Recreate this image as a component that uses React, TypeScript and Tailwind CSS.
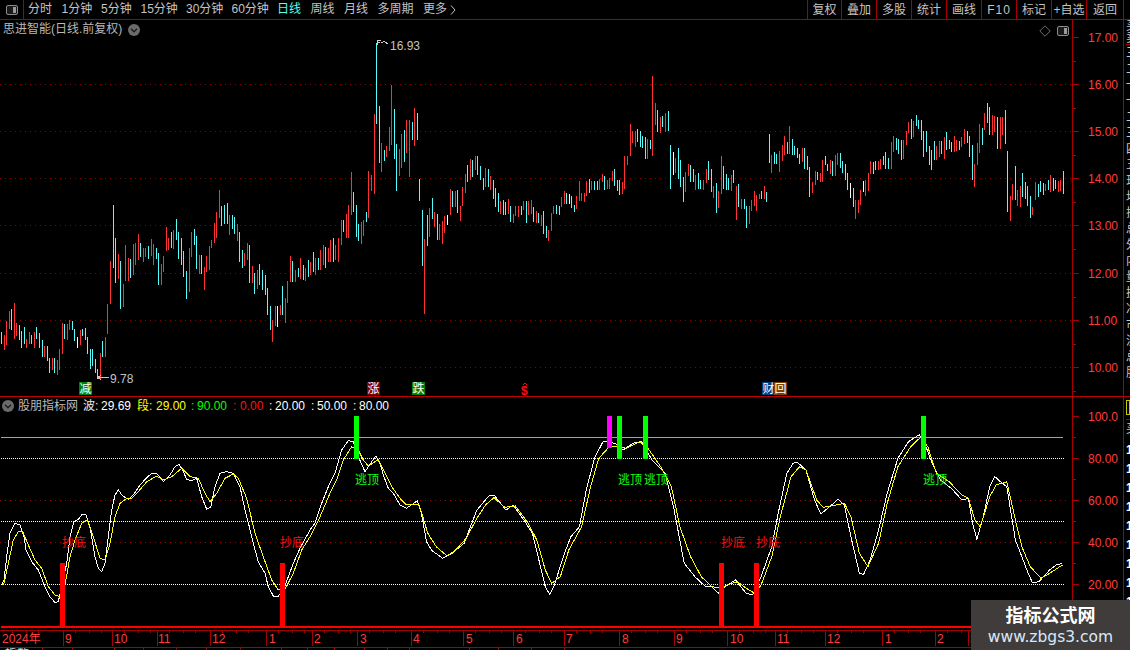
import React from "react";

type Bar = { x: number; c: string; y1: number; y2: number };

const parse = (s: string, ox: number, oy: number, sc = 3): Bar[] =>
  s
    .trim()
    .split(/\s+/)
    .map((t) => {
      const m = t.match(/(\d+)([rcw])(\d+)-(\d+)/)!;
      return {
        x: ox + Math.floor(+m[1] / sc),
        c: m[2],
        y1: oy + Math.floor(+m[3] / sc),
        y2: oy + Math.ceil(+m[4] / sc),
      };
    });

const A = `4c427-462 13r435-480 19r393-465 28r363-415 34c358-420 43r340-445 49r400-438 58c405-450 64c423-474 73c412-460 79r447-472 88r427-462 94c435-462 103r427-474 109c412-447 118c430-472 127c450-500 133r468-500 142c468-512 148c505-548 157r505-540 163c505-548 172r510-555 178r477-540 187r400-492 193c402-445 202r403-450 208r392-418 217c393-420 223c418-453 232w442-474 241r420-465 247c418-438 256c415-450 262c442-490 271c477-537 277c477-527 286c507-547 292c537-565 301r490-568 307c453-500 316r442-500 322r343-432 331r213-342 340c45-232 346c145-278 355r193-267 361c215-355 370r282-350 376r165-272 385r205-272 391c208-262 400r162-255 406r160-225 415r133-210 421c160-200 430r175-215 436r175-200 445c168-207 454r148-198 460r163-225 469c175-205 475c190-285 484r222-285 490r198-245 499r113-182 505r145-180 514c126-173 520r120-175 529c88-150 535c126-205 544c145-225 550c185-260 559c243-327 568r175-305 574r126-200 583c118-165 589c138-235 598r195-250 604c195-250 613r232-300 619r200-245 628r168-240 634r150-172 643r100-158 649r67-143 658r0-84 664c50-107 673c45-102 682c40-102 688r75-135 697c75-115 703c82-132 712r102-152 718c126-215 727c180-232 733r190-228 742r160-210 748c165-278 757r228-278 763c250-312 772r240-297 778c222-285 787c240-300 796c255-315 802c295-375 811c348-420 817r390-456 826r350-408 832w348-410 841r345-375 847c290-375 856r325-398 862r275-338 871r198-275 877c215-275 886r240-275 895c235-260`;

const GAP = `300r258-279 303c265-280 305r268-281 308c260-277 310r262-275 313c252-272 315r258-275 318c258-270 320r250-270 323r245-265 325c247-268 328r248-262 330r240-262 333c238-262 335r245-260 338r238-262`;

const B = `4r572-645 10c570-605 19r552-622 25r525-622 34r426-555 40c486-545 49c525-620 55c582-632 64r578-640 70r570-618 79c548-575 85r425-563 94r435-482 103r252-492 109c40-282 118c228-398 124r340-425 133c360-393 139r348-380 148r293-362 154r165-343 163c237-387 169c342-482 178r357-438 184r312-412 193c300-395 199r270-368 208r272-440 217c277-330 223r235-347 232c250-330 238c447-512 247c540-707 253r628-852 262c555-648 268r535-620 277c505-567 283r547-590 292c553-630 298r583-628 307r575-640 313r558-608 322w555-585 331r477-555 337c483-530 346r483-530 352c480-548 361r530-572 367r472-528 376r432-488 382c405-455 391r387-450 397c390-440 406r380-420 412c378-435 421c408-450 430c445-480 436r415-470 445c417-470 451r438-478 460c450-507 466c475-530 475c490-545 481r513-552 490c510-553 496c518-555 505r507-550 511c530-575 520r552-578 526r530-558 535r530-560 544c528-555 550r513-538 559c513-578 565r515-555 574r510-550 580c532-575 589r545-578 595c550-577 604r555-588 610c545-612 619c588-622 625r600-632 634r550-603 640r528-552 649c525-552 658c530-555 664r503-530 673r483-520 679c490-522 688w492-520 694c500-533 703c525-545 709r498-535 718r453-512 724r490-512 733r490-515 739r453-497 748c447-488 754r453-480 763c453-480 772c455-480 778r447-478 787r432-455 793c440-480 802r450-475 808r445-475 817r425-453 823c418-467 832c450-483 838c450-493 847r457-492 853r380-477 862r378-405 871r282-378 877r305-338 886r305-350 892c297-335 901c305-350 907c318-352 916c322-385 922r328-387 931c330-355 937r140-378 946r220-285 952c240-306 961r262-308 967c258-290 976r250-305 985c245-303 991c345-477 1000w367-435 1006r385-428 1015c355-445`;

const C = `1c210-290 10c262-335 16r247-305 25r222-258 31c225-275 40c238-275 46r255-300 55c250-295 61c270-297 70r272-300 79r237-278 85c213-270 94c237-305 100r288-323 109c280-368 115r305-353 124r198-310 130c228-297 139c252-300 145c265-300 154r255-302 160c240-278 169r288-390 175c282-350 184r328-355 193c328-357 199c348-413 208r348-400 214r332-362 223r305-348 229r315-362 238r312-327 244c303-327 253r288-327 259c307-335 268c132-218 274r195-248 283c187-222 289c192-222 298r185-245 307r165-212 313r140-195 322c158-192 328r110-192 337c147-195 343c168-195 352c175-203 358c192-222 367r175-215 373c175-235 382c198-240 388c232-320 397r278-308 406r243-285 412c247-270 421r250-275 427r210-275 436c198-225 442c222-243 451r210-250 457c215-258 466r195-258 472r190-225 481c190-232 487c213-248 496c222-270 502c250-300 511w280-323 520c295-350 526r330-387 535r330-368 541r300-345 550w275-305 556r272-318 565r250-302 571r213-252 580c218-252 586c215-238 595r215-240 601r208-235 610c198-225 616c188-237 625c205-237 634r158-235 640r138-185 649c145-178 655c148-190 664c150-210 670r152-205 679r125-165 685r97-127 694c87-147 700r95-140 709c75-107 715c90-115 724c90-150 730c125-200 739c125-185 748c168-225 754c180-240 763c155-208 769r168-208 778r155-200 784c155-190 793r142-207 799c127-180 808c150-175 814c158-186 823r138-186 829r150-182 838c153-178 844r142-170 853r118-160 862c125-157 868c138-200 877c165-270 883r222-290 892r160-225 898r102-188 907c115-165 913r70-120 922c40-98 928c52-135 937r75-135 943r78-125 952c82-175 961r82-175 967r82-135 976c60-162 982c183-365 991r320-392 997r282-330 1006c228-330 1012r300-348 1021r288-350 1027c250-320 1036c277-325 1042c288-348 1051c320-383 1057r352-375 1066r277-330 1075c282-320 1081c275-305 1090c280-315 1096r282-303 1105c270-300 1111r255-305 1120c265-302 1126c270-295 1135r275-305 1141r272-303 1150c243-312`;

const bars: Bar[] = [
  ...parse(A, 0, 190),
  ...parse(GAP, 0, 0, 1),
  ...parse(B, 340, 30),
  ...parse(C, 680, 90),
];

const colour: Record<string, string> = { r: "#ff3232", c: "#54fcfc", w: "#ffffff" };

const z1 = (s: string) =>
  s
    .trim()
    .split(/\s+/)
    .map((p) => {
      const [a, b] = p.split(",").map(Number);
      return `${(a / 3).toFixed(1)},${(430 + b / 3).toFixed(1)}`;
    });
const z2 = (s: string) =>
  s
    .trim()
    .split(/\s+/)
    .map((p) => {
      const [a, b] = p.split(",").map(Number);
      return `${(400 + a / 2.34).toFixed(1)},${(430 + b / 3).toFixed(1)}`;
    });

const white = [
  ...z1(
    "5,465 12,450 20,380 30,310 45,280 60,285 72,320 78,360 95,395 115,420 135,470 150,500 165,518 175,515 185,470 200,400 210,320 222,275 235,268 247,252 258,255 270,290 285,380 295,415 305,425 315,400 325,320 335,240 345,195 355,180 368,198 385,208 400,195 420,165 440,143 455,130 470,130 490,155 510,135 525,110 538,103 550,125 560,148 575,152 590,145 605,200 620,238 632,232 645,170 660,130 680,125 700,130 720,170 735,240 748,290 760,340 775,395 795,430 805,470 820,498 835,498 850,480 865,440 880,400 900,355 930,300 945,280 965,220 985,170 1005,130 1025,60 1045,32 1060,35 1075,80 1095,125 1115,95 1128,78 1140,100 1150,135 1165,175 1180,190"
  ),
  ...z2(
    "0,225 15,235 30,222 40,212 50,250 62,335 75,362 100,385 120,372 150,340 165,290 180,240 210,195 220,195 248,240 265,225 290,270 310,310 325,390 340,470 350,493 360,470 385,370 400,320 420,290 435,185 455,85 475,35 490,35 505,42 522,60 545,40 565,35 590,90 620,130 640,230 665,400 690,440 715,470 730,470 745,490 760,470 785,450 810,490 825,495 845,440 870,350 885,250 905,130 920,100 930,97 950,120 970,210 985,252 1010,225 1025,208 1040,225 1055,320 1075,430 1085,433 1100,390 1120,300 1140,190 1165,85 1190,35 1215,14 1225,30 1245,100 1265,150 1290,175 1315,210 1330,205 1340,280 1350,328 1365,260 1380,170 1392,140 1405,155 1420,170 1440,330 1470,430 1480,458 1495,455 1520,420 1535,405 1550,400"
  ),
].join(" ");

const yellow = [
  ...z1(
    "5,465 12,460 25,400 40,330 55,305 68,305 85,345 105,390 125,415 145,470 165,495 180,500 195,465 210,380 225,330 245,280 262,270 280,320 300,385 315,390 330,340 345,260 360,220 380,205 395,205 415,185 440,155 470,138 490,150 515,140 545,115 570,140 595,145 615,190 630,215 650,190 675,145 700,132 715,145 740,205 765,310 790,380 815,450 835,480 855,478 880,430 905,360 930,320 960,260 990,190 1010,150 1030,90 1055,50 1075,60 1090,90 1105,108 1125,95 1135,90 1155,130 1175,170"
  ),
  ...z2(
    "0,205 15,225 30,222 45,225 65,310 85,350 110,378 130,360 155,325 180,265 200,225 220,203 245,232 270,228 300,280 320,330 340,420 355,460 375,440 395,360 425,290 445,175 465,85 490,50 510,50 530,55 560,35 580,55 610,110 635,170 655,290 680,380 705,440 730,470 750,475 765,465 790,455 810,475 830,490 845,465 870,380 890,260 915,140 935,110 950,120 975,210 990,232 1020,225 1040,220 1055,260 1075,370 1095,410 1120,340 1140,220 1165,110 1195,50 1218,22 1235,50 1255,130 1285,155 1315,195 1330,205 1345,270 1358,290 1380,200 1395,165 1420,155 1440,270 1455,350 1475,410 1500,445 1520,430 1550,405"
  ),
].join(" ");

const leftTabs = [
  ["分时", 24],
  ["1分钟", 30],
  ["5分钟", 30],
  ["15分钟", 36],
  ["30分钟", 36],
  ["60分钟", 36],
  ["日线", 24],
  ["周线", 24],
  ["月线", 24],
  ["多周期", 36],
  ["更多", 24],
] as const;

const rightTabs = ["复权", "叠加", "多股", "统计", "画线", "F10", "标记", "+自选", "返回"];

const Chevron = ({ className }: { className: string }) => (
  <svg viewBox="0 0 12 12" className={className}>
    <circle cx="6" cy="6" r="6" fill="#6b6b6b" />
    <path d="M3 4.8 L6 7.8 L9 4.8" fill="none" stroke="#1c1c1c" strokeWidth="1.4" />
  </svg>
);

const Split = ({ className }: { className: string }) => (
  <svg viewBox="0 0 12 10" className={className}>
    <rect x="0.5" y="0.5" width="11" height="9" rx="1.5" fill="#1a1a1a" stroke="#8c8c8c" />
    <rect x="7" y="2" width="3" height="6" fill="#9a9a9a" />
  </svg>
);

const priceLevels = [
  ["17.00", 37],
  ["16.00", 84],
  ["15.00", 131],
  ["14.00", 178],
  ["13.00", 225],
  ["12.00", 273],
  ["11.00", 320],
  ["10.00", 367],
] as const;

const oscLevels = [
  ["100.0", 416],
  ["80.00", 458],
  ["60.00", 500],
  ["40.00", 542],
  ["20.00", 584],
] as const;

const tags: [string, number, string][] = [
  ["减", 79, "#008000"],
  ["涨", 367, "#800000"],
  ["跌", 412, "#008000"],
  ["财", 762, "#004080"],
  ["回", 774, "#804000"],
];

const greenBars = [354, 617, 643, 921];
const redBars = [60, 280, 719, 754];
const redLabels = [62, 280, 721, 756];
const greenLabels = [355, 618, 644, 923];

const dates: [string, number, number][] = [
  ["2024年", 0, 2],
  ["9", 63, 65],
  ["10", 112, 114],
  ["11", 157, 158],
  ["12", 210, 212],
  ["1", 266, 269],
  ["2", 312, 314],
  ["3", 357, 360],
  ["4", 411, 413],
  ["5", 463, 466],
  ["6", 513, 516],
  ["7", 564, 566],
  ["8", 619, 622],
  ["9", 674, 676],
  ["10", 727, 730],
  ["11", 775, 777],
  ["12", 825, 827],
  ["1", 882, 885],
  ["2", 935, 937],
  ["3", 968, 970],
];

const statusCells = [43, 30, 42, 29, 33, 30, 34, 41, 26, 27, 30, 23, 22, 60, 29, 33, 33];

const sideTop = ["买", "卖"];
const sideMid = ["三", "二", "一", "一", "二", "三", "四", "五", "现", "均", "振", "总", "外", "内", "量", "换", "净", "市", "流", "总", "股"];
const sideNum = ["1", "1", "1", "1", "1", "1", "1", "1", "1"];

export default function App() {
  return (
    <div className="relative flex h-[650px] w-[1130px] flex-col overflow-hidden bg-black text-[12px] [font-family:'Liberation_Sans','Noto_Sans_CJK_SC',sans-serif]">
      {/* Top bar */}
      <div className="flex h-[20px] shrink-0 border-b border-[#a80000] text-[#c4c4c4]">
        <div className="flex w-[24px] items-center justify-center border-r border-[#a80000]">
          <Split className="h-[10px] w-[12px]" />
        </div>
        <div className="flex items-center gap-[9.5px] pl-[4px] leading-[19px]">
          {leftTabs.map(([t, w]) => (
            <span
              key={t}
              style={{ width: w }}
              className={t === "日线" ? "whitespace-nowrap text-[#54fcfc]" : "whitespace-nowrap"}
            >
              {t}
            </span>
          ))}
          <span className="-ml-[7px]">
            <svg viewBox="0 0 6 10" className="h-[10px] w-[6px]">
              <path d="M1 0.5 L5 5 L1 9.5" fill="none" stroke="#c4c4c4" />
            </svg>
          </span>
        </div>
        <div className="ml-auto flex">
          {rightTabs.map((t, i) => (
            <div
              key={t}
              className={`flex items-center justify-center whitespace-nowrap border-l border-[#a80000] ${
                i === 0 ? "w-[34px]" : i === 8 ? "w-[37px]" : "w-[35px]"
              } ${t === "F10" ? "tracking-[1px]" : ""}`}
            >
              {t}
            </div>
          ))}
          <div className="w-[7px] border-l border-[#a80000]" />
        </div>
      </div>

      {/* Price panel */}
      <div className="flex h-[377px] shrink-0 border-b border-[#c00000]">
        <div className="relative w-[1072px]">
          <svg viewBox="0 20 1072 376" className="block h-[376px] w-[1072px]" shapeRendering="crispEdges">
            {priceLevels.slice(1).map(([l, y]) => (
              <line key={l} x1={0} x2={1072} y1={y + 0.5} y2={y + 0.5} stroke="#8c0000" strokeDasharray="1 4" />
            ))}
            {bars.map((b, i) => (
              <rect key={i} x={b.x} y={b.y1} width={1} height={b.y2 - b.y1} fill={colour[b.c]} />
            ))}
            <path d="M377.5 45 L377.5 40 L381 40 M377.5 42.5 L380 42.5 M381 43 L384 41.5 L388 44" fill="none" stroke="#d0d0d0" />
            <path d="M98 377.5 L109 377.5 M98 377.5 L101 375 M98 377.5 L101 380" fill="none" stroke="#c8c8c8" />
            <text x={390} y={50} fill="#c4c4c4" fontSize={12}>16.93</text>
            <text x={110} y={383} fill="#c4c4c4" fontSize={12}>9.78</text>
            {tags.map(([t, x, bg]) => (
              <g key={t}>
                <rect x={x} y={382} width={13} height={13} fill={bg} />
                <text x={x + 0.5} y={393} fill="#fff" fontSize={12}>{t}</text>
              </g>
            ))}
            <text x={521} y={395} fill="#ff1010" fontSize={12} fontWeight={700}>$</text>
            <path d="M523 385 L525 383 L527 385" fill="none" stroke="#ff1010" />
          </svg>
          <div className="absolute left-[3px] top-[1px] flex items-center gap-[6px] leading-[17px] text-[#b8b8b8]">
            <span>思进智能(日线.前复权)</span>
            <Chevron className="h-[12px] w-[12px]" />
          </div>
          <div className="absolute right-[3px] top-[5px] flex items-center gap-[6px]">
            <svg viewBox="0 0 12 12" className="h-[12px] w-[12px]">
              <path d="M6 0.8 L11.2 6 L6 11.2 L0.8 6 Z" fill="none" stroke="#6e6e6e" />
            </svg>
            <Split className="h-[10px] w-[12px]" />
          </div>
        </div>
        <div className="w-[51px] border-l border-[#a80000]">
          <svg viewBox="1073 20 50 376" className="block h-[376px] w-[50px]" shapeRendering="crispEdges">
            {priceLevels.map(([l, y]) => (
              <g key={l}>
                <rect x={1073} y={y} width={6} height={1} fill="#a80000" />
                <rect x={1073} y={y + 24} width={3} height={1} fill="#a80000" />
                <text x={1088} y={y + 5} fill="#ff3c3c" fontSize={12}>{l}</text>
              </g>
            ))}
          </svg>
        </div>
        <div className="flex w-[7px] flex-col overflow-hidden border-l border-[#a80000] pl-[2px] text-[#c8c8c8]">
          <div className="h-[25px] shrink-0 border-b border-[#a80000] leading-[12px]">
            {sideTop.map((s, i) => (
              <div key={i}>{s}</div>
            ))}
          </div>
          {sideMid.map((s, i) => (
            <div key={i} className="shrink-0 leading-[16px]">{s}</div>
          ))}
        </div>
      </div>

      {/* Oscillator + date axis */}
      <div className="flex min-h-0 flex-1">
        <div className="flex w-[1072px] flex-col">
          <div className="relative h-[233px] shrink-0">
            <svg viewBox="0 397 1072 233" className="block h-[233px] w-[1072px]" shapeRendering="crispEdges">
              {[500, 542].map((y) => (
                <line key={y} x1={0} x2={1066} y1={y + 0.5} y2={y + 0.5} stroke="#a00000" strokeDasharray="1 4" />
              ))}
              {[458, 521, 584].map((y) => (
                <line key={y} x1={1} x2={1064} y1={y + 0.5} y2={y + 0.5} stroke="#fff" strokeDasharray="1 1" />
              ))}
              <rect x={1} y={437} width={1062} height={1} fill="#1eff1e" />
              <rect x={1} y={626} width={1071} height={2} fill="#ff0000" />
              <polyline points={white} fill="none" stroke="#ffffff" strokeWidth={1} />
              <polyline points={yellow} fill="none" stroke="#ffff00" strokeWidth={1} />
              {greenBars.map((x) => (
                <rect key={x} x={x} y={416} width={5} height={42.5} fill="#00ff00" />
              ))}
              <rect x={607} y={416} width={5} height={32} fill="#ff00ff" />
              {redBars.map((x) => (
                <rect key={x} x={x} y={563} width={5} height={64} fill="#ff0000" />
              ))}
              {redLabels.map((x) => (
                <text key={x} x={x} y={547} fill="#ff1010" fontSize={12}>抄底</text>
              ))}
              {greenLabels.map((x) => (
                <text key={x} x={x} y={484} fill="#12ff12" fontSize={12}>逃顶</text>
              ))}
            </svg>
            <div className="absolute left-[2px] top-[2px] flex h-[14px] items-center whitespace-nowrap leading-[14px]">
              <Chevron className="mr-[4px] h-[12px] w-[12px]" />
              <span className="w-[65px] text-[#b8b8b8]">股朋指标网</span>
              <span className="w-[18px] text-[#e8e8e8]">波:</span>
              <span className="w-[36px] text-white">29.69</span>
              <span className="w-[19px] text-[#ffff00]">段:</span>
              <span className="w-[35px] text-[#ffff00]">29.00</span>
              <span className="w-[6px] text-[#00ff00]">:</span>
              <span className="w-[36px] text-[#00ff00]">90.00</span>
              <span className="w-[7px] text-[#ff1010]">:</span>
              <span className="w-[29px] text-[#ff1010]">0.00</span>
              <span className="w-[6px] text-white">:</span>
              <span className="w-[36px] text-white">20.00</span>
              <span className="w-[6px] text-white">:</span>
              <span className="w-[36px] text-white">50.00</span>
              <span className="w-[6px] text-white">:</span>
              <span className="text-white">80.00</span>
            </div>
          </div>
          <div className="h-[17px] shrink-0 border-t border-[#a80000]">
            <svg viewBox="0 631 1072 16" className="block h-[16px] w-[1072px]" shapeRendering="crispEdges">
              {dates.map(([t, lx, tx], i) => (
                <g key={i}>
                  {i > 0 && <rect x={lx} y={631} width={1} height={15} fill="#a80000" />}
                  <rect x={lx + 12} y={631} width={1} height={2} fill="#a80000" />
                  <rect x={lx + 26} y={631} width={1} height={2} fill="#a80000" />
                  <rect x={lx + 38} y={631} width={1} height={2} fill="#a80000" />
                  <text x={tx} y={643} fill="#ff3c3c" fontSize={12}>{t}</text>
                </g>
              ))}
            </svg>
          </div>
          <div className="flex h-[3px] shrink-0 overflow-hidden border-t border-[#a80000]">
            {statusCells.map((w, i) => (
              <div key={i} style={{ width: w }} className="shrink-0 border-r border-[#a80000] pl-[5px] leading-[12px] text-[#d8d8d8]">
                {i === 0 ? "指数" : ""}
              </div>
            ))}
          </div>
        </div>
        <div className="w-[51px] border-l border-[#a80000]">
          <svg viewBox="1073 397 50 233" className="block h-[233px] w-[50px]" shapeRendering="crispEdges">
            {oscLevels.map(([l, y]) => (
              <g key={l}>
                <rect x={1073} y={y} width={6} height={1} fill="#a80000" />
                <rect x={1073} y={y + 21} width={3} height={1} fill="#a80000" />
                <text x={1088} y={y + 5} fill="#ff3c3c" fontSize={12}>{l}</text>
              </g>
            ))}
          </svg>
        </div>
        <div className="flex w-[7px] flex-col overflow-hidden border-l border-[#a80000] pl-[2px] text-[#c8c8c8]">
          <div className="mt-[3px] h-[15px] shrink-0 border border-[#c8c800] text-[#ffff00]" />
          <div className="mt-[4px] h-[22px] shrink-0 border-t border-[#a80000] leading-[18px]">买</div>
          {sideNum.map((s, i) => (
            <div key={i} className="shrink-0 font-bold leading-[19px] text-white">{s}</div>
          ))}
        </div>
      </div>

      {/* Watermark */}
      <div className="absolute bottom-0 right-0 flex h-[50px] w-[159px] flex-col items-center bg-[#403c3c]">
        <div className="pt-[4px] text-[18px] font-bold leading-[24px] text-white">指标公式网</div>
        <div className="text-[15.5px] leading-[18px] text-[#d8e8f8] [font-family:'DejaVu_Sans',sans-serif]">www.zbgs3.com</div>
      </div>
    </div>
  );
}
